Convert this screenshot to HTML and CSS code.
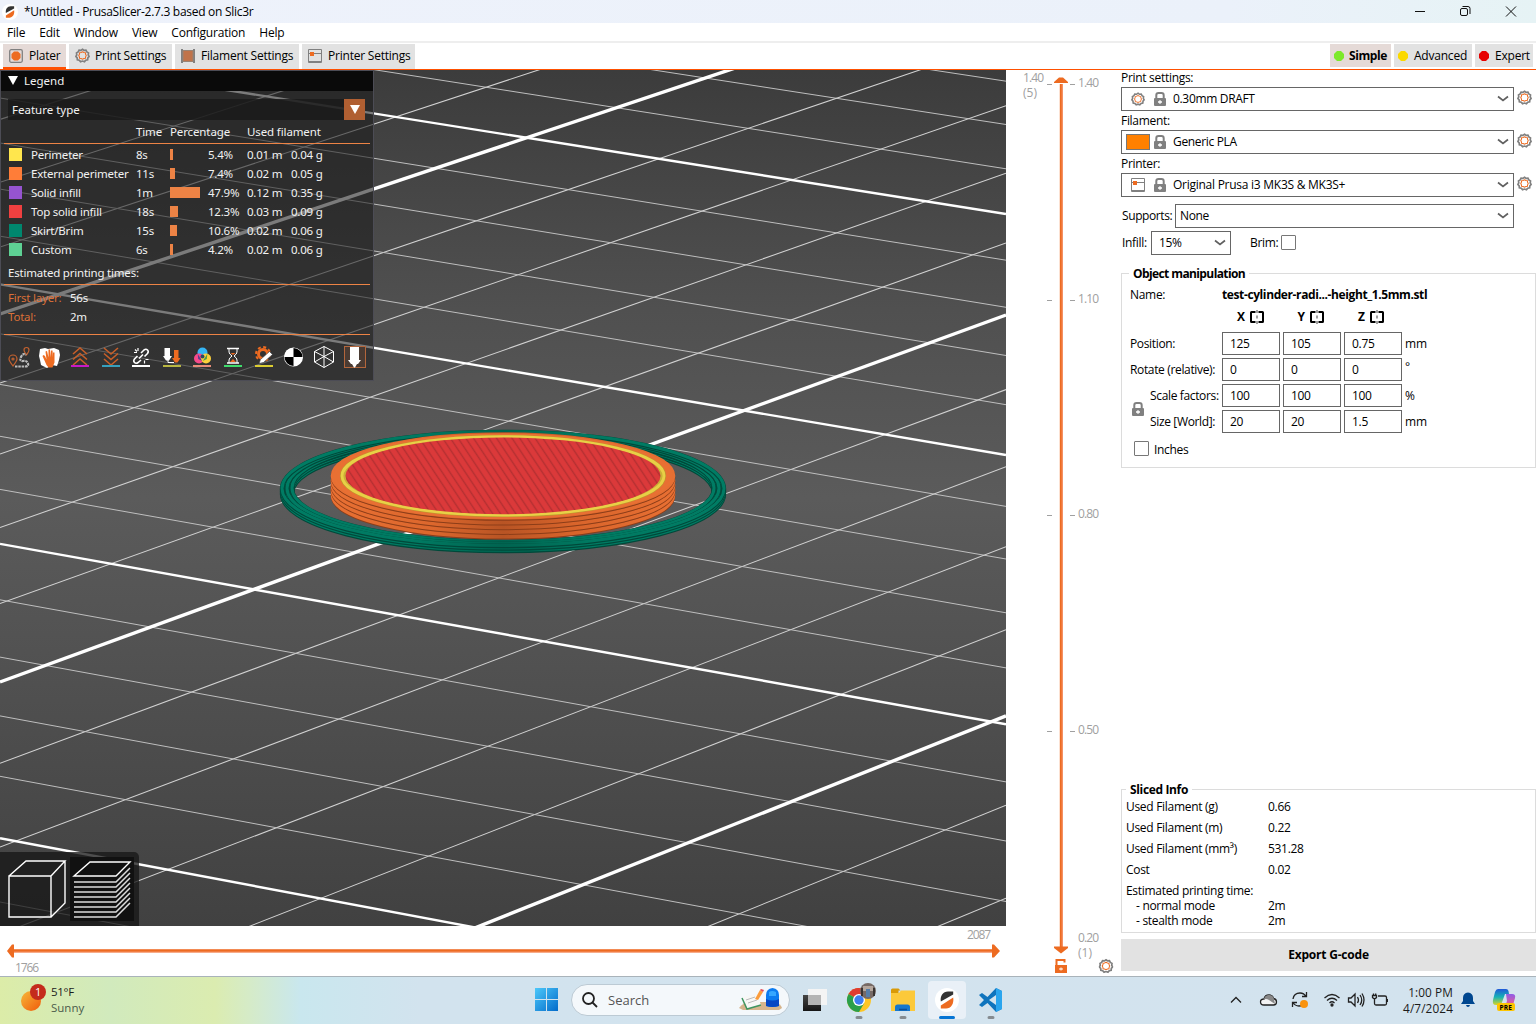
FILE: index.html
```html
<!DOCTYPE html>
<html lang="en">
<head>
<meta charset="utf-8">
<title>*Untitled - PrusaSlicer-2.7.3 based on Slic3r</title>
<link rel="stylesheet" href="styles.css">
</head>
<body>
<svg class="defs" width="0" height="0">
  <defs>
    <symbol id="gear" viewBox="0 0 16 16">
      <path d="M8 1.400l1.700 1.200 2-.3.9 1.900 1.800 1-.3 2 .9 1.800-1.300 1.500-.2 2.100-2 .5-1.400 1.500L8 13.900l-2.100.7-1.400-1.500-2-.5-.2-2.100L1 9l.9-1.800-.3-2 1.800-1 .9-1.900 2 .3z" fill="none" stroke="#808080" stroke-width="1.800"/>
      <path d="M8 4l1.500.8 1.600.3.2 1.600L12 8l-.7 1.400-.2 1.600-1.600.3L8 12l-1.500-.7-1.600-.3-.2-1.600L4 8l.7-1.300.2-1.600 1.600-.3z" fill="none" stroke="#ed6b21" stroke-width="1.100"/>
    </symbol>
    <symbol id="lock" viewBox="0 0 12 14">
      <path d="M2.300 7V3.200Q2.300 1 4.500 1h3Q9.700 1 9.700 3.200V7" fill="none" stroke="#808080" stroke-width="2"/>
      <rect y="6" width="12" height="8" rx="1" fill="#808080"/>
      <path d="M4 10h4M6 8.300v3.400" stroke="#fff" stroke-width="1.400"/>
    </symbol>
    <symbol id="printer" viewBox="0 0 14 14">
      <path d="M.5.5h13v13H.5zM.5 4.500h13" fill="none" stroke="#808080"/>
      <path d="M1 12.500h12" stroke="#808080"/>
      <rect x="2" y="3" width="4" height="4" fill="#ed6b21"/>
    </symbol>
    <symbol id="chev" viewBox="0 0 12 8"><path d="M1 1.500l5 4 5-4" fill="none" stroke="#606060" stroke-width="1.700"/></symbol>
    <symbol id="mirror" viewBox="0 0 14 14">
      <path d="M5.500 2H1.500Q1 2 1 2.500v9Q1 12 1.500 12H5.500M8.500 2h4Q13 2 13 2.500v9Q13 12 12.500 12h-4" fill="none" stroke="#000" stroke-width="2"/>
      <path d="M7 0v3M7 5.500v3M7 11v3" stroke="#808080" stroke-width="1.500"/>
    </symbol>
    <symbol id="prusa" viewBox="0 0 24 24">
      <circle cx="12" cy="12" r="12" fill="#fff"/>
      <path d="M5.800 13.500C4.800 8 8 3.400 13 3.400h5.200v3.200z" fill="#333"/>
      <path d="M18.200 9.500C19.200 15.500 16 20.600 11 20.600H5.800v-3.200z" fill="#ed6b21"/>
    </symbol>
  </defs>
</svg>

<header class="titlebar">
  <svg class="app-icon" width="16" height="16"><use href="#prusa"/></svg>
  <span class="title">*Untitled - PrusaSlicer-2.7.3 based on Slic3r</span>
  <svg class="winbtns" width="104" height="22" fill="none" stroke="#111">
    <path d="M1 10.500h10M92 5.500l10 10M102 5.500l-10 10"/>
    <rect x="46.500" y="7.500" width="7" height="7" rx="1.500"/>
    <path d="M48.500 5.500h5.500q2 0 2 2v5.500"/>
  </svg>
</header>
<nav class="menubar"><span>File</span><span>Edit</span><span>Window</span><span>View</span><span>Configuration</span><span>Help</span></nav>

<div class="tabs">
  <div class="tab t1 on"><svg width="14" height="14"><rect x=".7" y=".7" width="12.600" height="12.600" rx="1.500" fill="none" stroke="#808080" stroke-width="1.300"/><path d="M5 2.500h4l2.500 2.500v4L9 11.500H5L2.500 9V5z" fill="#ed6b21"/></svg><span>Plater</span></div>
  <div class="tab t2"><svg width="15" height="15"><use href="#gear"/></svg><span>Print Settings</span></div>
  <div class="tab t3"><svg width="14" height="14"><path d="M1 0v14M13 0v14" stroke="#808080" stroke-width="2"/><path d="M2 1.500h10v11H2z" fill="#c0734a" stroke="#9a8373"/></svg><span>Filament Settings</span></div>
  <div class="tab t4"><svg width="14" height="14"><use href="#printer"/></svg><span>Printer Settings</span></div>
  <div class="spacer"></div>
  <div class="mode m1 on"><svg width="10" height="12"><path d="M3 1h4l3 3v4l-3 3H3L0 8V4z" fill="#7de92b"/></svg><span>Simple</span></div>
  <div class="mode m2"><svg width="10" height="12"><path d="M3 1h4l3 3v4l-3 3H3L0 8V4z" fill="#fbd900"/></svg><span>Advanced</span></div>
  <div class="mode m3"><svg width="10" height="12"><path d="M3 1h4l3 3v4l-3 3H3L0 8V4z" fill="#e70000"/></svg><span>Expert</span></div>
</div>

<main class="main">
  <section class="left">
    <div class="viewport">
      <svg class="scene" id="scene" width="1006" height="856" viewBox="0 70 1006 856">
        <defs>
          <pattern id="infill" width="7.700" height="20" patternUnits="userSpaceOnUse" patternTransform="skewX(33.500)">
            <rect width="7.700" height="20" fill="#db393a"/><rect x="5.500" width="1.700" height="20" fill="#b53032"/>
          </pattern>
          <linearGradient id="wall" x1="330" x2="676" y1="0" y2="0" gradientUnits="userSpaceOnUse">
            <stop offset="0" stop-color="#e87033"/><stop offset=".3" stop-color="#dc672d"/><stop offset=".5" stop-color="#b85424"/><stop offset=".7" stop-color="#d8642b"/><stop offset="1" stop-color="#e87033"/>
          </linearGradient>
          <linearGradient id="loop" x1="280" x2="727" y1="0" y2="0" gradientUnits="userSpaceOnUse">
            <stop offset="0" stop-color="#007c64"/><stop offset=".3" stop-color="#007a62"/><stop offset=".5" stop-color="#006450"/><stop offset=".7" stop-color="#007a62"/><stop offset="1" stop-color="#007c64"/>
          </linearGradient>
        </defs>
        <g id="grid"></g>
        <g id="skirt"></g>
        <g id="part"></g>
      </svg>

      <div class="legend">
        <div class="lg-title"><svg width="10" height="9"><path d="M0 0h10L5 9z" fill="#fff"/></svg><span>Legend</span></div>
        <div class="lg-combo"><span>Feature type</span><i><svg width="10" height="9"><path d="M0 0h10L5 9z" fill="#fff"/></svg></i></div>
        <div class="lg-head lg-row"><span></span><span></span><span>Time</span><span>Percentage</span><span></span><span>Used filament</span></div>
        <div class="lg-rows">
          <div class="lg-row"><b class="c1"></b><span>Perimeter</span><span>8s</span><i style="width:3px"></i><span>5.4%</span><span>0.01 m</span><span>0.04 g</span></div>
          <div class="lg-row"><b class="c2"></b><span>External perimeter</span><span>11s</span><i style="width:5px"></i><span>7.4%</span><span>0.02 m</span><span>0.05 g</span></div>
          <div class="lg-row"><b class="c3"></b><span>Solid infill</span><span>1m</span><i style="width:30px"></i><span>47.9%</span><span>0.12 m</span><span>0.35 g</span></div>
          <div class="lg-row"><b class="c4"></b><span>Top solid infill</span><span>18s</span><i style="width:8px"></i><span>12.3%</span><span>0.03 m</span><span>0.09 g</span></div>
          <div class="lg-row"><b class="c5"></b><span>Skirt/Brim</span><span>15s</span><i style="width:7px"></i><span>10.6%</span><span>0.02 m</span><span>0.06 g</span></div>
          <div class="lg-row"><b class="c6"></b><span>Custom</span><span>6s</span><i style="width:3px"></i><span>4.2%</span><span>0.02 m</span><span>0.06 g</span></div>
        </div>
        <div class="lg-est">Estimated printing times:</div>
        <div class="lg-times"><div><em>First layer:</em><span>56s</span></div><div><em>Total:</em><span>2m</span></div></div>
        <div class="lg-icons">
          <svg width="373" height="46" viewBox="0 335 373 46" fill="none">
            <g stroke="#c4622f" stroke-width="1.200"><path d="M13 366c-3-4-4-5.500-4-7a4 4 0 0 1 8 0c0 1.500-1 3-4 7zM26.500 355c-2-3-2.500-3.500-2.500-5a2.500 2.500 0 0 1 5 0c0 1.500-.5 2-2.500 5z"/><circle cx="13" cy="359" r="1"/></g>
            <path d="M15 366.500h10q4 0 3-3t-5-2.500-2-4 5-2" stroke="#bbb" stroke-width="2.200" stroke-dasharray="2.500 .8"/>
            <path d="M40 349l5-1 3 1 6-1 5 2 1 5-1 5-2 6-5-1-5 3-6-3-1-5-1-4z" fill="#fff"/>
            <path d="M45 356l-1.500-1-1 1 4 9 2 2.500h4l2-5v-10h-1.500v5l-.5-7h-1.500l-.5 7-.5-8h-1.500v8l-1.500-6.500-1.500.5 1 8z" fill="#ed6b21"/>
            <g stroke="#c95f28" stroke-width="1.600"><path d="M73 354l7-6 7 6M73 359.500l7-6 7 6M73 365l7-6 7 6"/><path d="M104 348l7 6 7-6M104 353.500l7 6 7-6M104 359l7 6 7-6"/></g>
            <path d="M71 366h18" stroke="#c819c6" stroke-width="2"/><path d="M102 366h18" stroke="#36a0bd" stroke-width="2"/><path d="M132 366h18" stroke="#fff" stroke-width="2"/><path d="M163 366h18" stroke="#b9b742" stroke-width="2"/><path d="M193 366h18" stroke="#e88d7a" stroke-width="2"/><path d="M224 366h18" stroke="#3fdc6c" stroke-width="2"/><path d="M255 366h18" stroke="#dccd31" stroke-width="2"/>
            <g stroke="#fff" stroke-width="1.600"><path d="M141 353l3-3q2-1.500 3.500 0t0 3.500l-3 3M141 360l-3 2.500q-2 1.500-3.500 0t0-3.500l3-3M139 358.500l4-4"/><path d="M138 348v3M134 352.500h3M144.500 363.500v-3M148.500 359.500h-3M135 349.500l2 2" stroke-width="1.200"/></g>
            <path d="M164.500 348h5.500v8h2l-3 4.500h-3l-3-4.500h1.500z" fill="#fff"/><path d="M168 359v3.500h6" stroke="#fff"/><path d="M174 350h4.500v8h2l-3 4.500h-2.500l-3-4.500h2z" fill="#ed6b21"/>
            <circle cx="202.500" cy="352.500" r="5" fill="#35b5f5"/><circle cx="199" cy="358.500" r="5" fill="#f74a8b"/><circle cx="206" cy="358.500" r="5" fill="#fbd03b"/><path d="M197.700 354l4.500 7-4-2z" fill="#5a3c8e"/><path d="M207.300 354l-4.500 7 4-2z" fill="#4a9a4a"/><circle cx="202.500" cy="356.500" r="2" fill="#2e4a63"/>
            <path d="M227 348.500h12M227 363h12" stroke="#fff" stroke-width="1.600"/><path d="M229 349v3q0 2 3 4-3 2-3 4v3M237 349v3q0 2-3 4 3 2 3 4v3" stroke="#fff"/><path d="M230.500 353h5l-2.500 2zM230 362l3-3 3 3z" fill="#ed6b21"/>
            <circle cx="263" cy="354" r="4.500" stroke="#ed6b21" stroke-width="3"/><circle cx="263" cy="354" r="7" stroke="#ed6b21" stroke-width="2" stroke-dasharray="3 2.500"/><path d="M259 363.500l1.500-4 9-8 3 3-9 8z" fill="#fff" stroke="#333" stroke-width=".6"/>
            <circle cx="293.500" cy="357" r="9.500" fill="#fff"/><path d="M293.500 357v-9a9 9 0 0 0-9 9zM293.500 357v9a9 9 0 0 0 9-9z" fill="#fff"/><path d="M293.500 357v-9a9 9 0 0 1 9 9zM293.500 357v9a9 9 0 0 1-9-9z" fill="#000"/>
            <path d="M324 346.500l9.500 5v10.500l-9.500 5.500-9.500-5.500v-10.500zM314.500 351.500l9.500 5 9.500-5M324 346.500v21M314.500 362l9.500-5.500 9.500 5.500" stroke="#fff"/>
            <rect x="344.500" y="346.500" width="21" height="21" stroke="#b3663c" fill="#4a3b33"/><path d="M350 347h9v13h2l-3 4h-1l-2 3.500h-1l-2-3.500h-1l-3-4h2z" fill="#fff"/>
          </svg>
        </div>
      </div>

      <div class="views">
        <svg width="139" height="74" viewBox="0 852 139 74" fill="none">
          <rect x="70" y="857" width="64" height="64" fill="#111"/>
          <path d="M9 876h42v41H9zM9 876l17-15h39L51 876M65 861v42l-14 14" stroke="#fff" stroke-width="1.400"/>
          <path d="M74 876l16-14h40l-14 14z" stroke="#fff" stroke-width="1.400"/>
          <path d="M74 882h42l14-14M74 887h42l14-14M74 892h42l14-14M74 897h42l14-14M74 902h42l14-14M74 907h42l14-14M74 912h42l14-14M74 917h42l14-14" stroke="#ddd" stroke-width="1.500"/>
        </svg>
      </div>
    </div>
    <svg class="hslider" width="1006" height="50" viewBox="0 926 1006 50">
      <path d="M14 951h980" stroke="#f59163" stroke-width="3.500"/><path d="M14 950.500h980" stroke="#ed6b21" stroke-width="2"/>
      <path d="M7 951l5-6.500h2v13h-2zM1000 951l-6-6.500h-2v13h2z" fill="#ed6b21"/>
      <text x="967" y="939" textLength="24">2087</text><text x="15" y="972" textLength="24">1766</text>
    </svg>
  </section>

  <svg class="vslider" width="115" height="906" viewBox="1006 70 115 906">
    <path d="M1061.500 84v864" stroke="#f59163" stroke-width="3"/><path d="M1060.700 84v864" stroke="#ed6b21" stroke-width="1.800"/>
    <path d="M1054 82l5-4.500h4l5 4.500v1h-14zM1054 948v-1.500h14v1.500l-7 5.500z" fill="#ed6b21"/>
    <path d="M1047 84.500h5M1070 84.500h5M1047 300.500h5M1070 300.500h5M1047 515.500h5M1070 515.500h5M1047 731.500h5M1070 731.500h5" stroke="#a0a0a0"/>
    <text x="1023" y="82" textLength="21">1.40</text><text x="1023" y="97" textLength="14">(5)</text>
    <text x="1078" y="87" textLength="21">1.40</text><text x="1078" y="303" textLength="21">1.10</text><text x="1078" y="518" textLength="21">0.80</text><text x="1078" y="734" textLength="21">0.50</text><text x="1078" y="942" textLength="21">0.20</text><text x="1078" y="957" textLength="14">(1)</text>
    <path d="M1056.500 966v-6h8v2.500" fill="none" stroke="#ed6b21" stroke-width="2"/><rect x="1055" y="965" width="12" height="8" fill="#ed6b21"/><path d="M1059 969h4M1061 967.500v3" stroke="#fff"/>
    <use href="#gear" x="1098.500" y="958.500" width="15" height="15"/>
  </svg>

  <aside class="panel">
    <label class="plab">Print settings:</label>
    <div class="prow"><div class="combo"><svg class="ic" width="14" height="14"><use href="#gear"/></svg><svg class="lk" width="12" height="14"><use href="#lock"/></svg><span>0.30mm DRAFT</span><svg class="cv" width="12" height="8"><use href="#chev"/></svg></div><svg class="pg" width="15" height="15"><use href="#gear"/></svg></div>
    <label class="plab">Filament:</label>
    <div class="prow"><div class="combo"><i class="sw"></i><svg class="lk" width="12" height="14"><use href="#lock"/></svg><span>Generic PLA</span><svg class="cv" width="12" height="8"><use href="#chev"/></svg></div><svg class="pg" width="15" height="15"><use href="#gear"/></svg></div>
    <label class="plab">Printer:</label>
    <div class="prow"><div class="combo"><svg class="ic" width="14" height="14"><use href="#printer"/></svg><svg class="lk" width="12" height="14"><use href="#lock"/></svg><span class="wide">Original Prusa i3 MK3S &amp; MK3S+</span><svg class="cv" width="12" height="8"><use href="#chev"/></svg></div><svg class="pg" width="15" height="15"><use href="#gear"/></svg></div>
    <div class="srow"><span class="k1">Supports:</span><div class="combo plain"><span>None</span><svg class="cv" width="12" height="8"><use href="#chev"/></svg></div></div>
    <div class="srow s2"><span class="k2">Infill:</span><div class="combo pct"><span>15%</span><svg class="cv" width="12" height="8"><use href="#chev"/></svg></div><span class="k3">Brim:</span><i class="cb"></i></div>

    <section class="group obj">
      <h3>Object manipulation</h3>
      <div class="name"><span>Name:</span><strong>test-cylinder-radi...-height_1.5mm.stl</strong></div>
      <div class="axes"><span>X<svg width="14" height="14"><use href="#mirror"/></svg></span><span>Y<svg width="14" height="14"><use href="#mirror"/></svg></span><span>Z<svg width="14" height="14"><use href="#mirror"/></svg></span></div>
      <div class="fields">
        <span>Position:</span><b>125</b><b>105</b><b>0.75</b><u>mm</u>
        <span>Rotate (relative):</span><b>0</b><b>0</b><b>0</b><u class="deg">°</u>
        <span class="ind">Scale factors:</span><b>100</b><b>100</b><b>100</b><u>%</u>
        <span class="ind">Size [World]:</span><b>20</b><b>20</b><b>1.5</b><u>mm</u>
        <svg class="ratio" width="12" height="14"><use href="#lock"/></svg>
      </div>
      <div class="inches"><i class="cb"></i><span>Inches</span></div>
    </section>

    <section class="group info">
      <h3>Sliced Info</h3>
      <div class="ir"><span>Used Filament (g)</span><span>0.66</span></div>
      <div class="ir"><span>Used Filament (m)</span><span>0.22</span></div>
      <div class="ir"><span>Used Filament (mm³)</span><span>531.28</span></div>
      <div class="ir"><span>Cost</span><span>0.02</span></div>
      <div class="ir est"><span>Estimated printing time:</span></div>
      <div class="ir sm"><span>- normal mode</span><span>2m</span></div>
      <div class="ir sm"><span>- stealth mode</span><span>2m</span></div>
    </section>
    <div class="export">Export G-code</div>
  </aside>
</main>

<footer class="taskbar">
  <svg class="sun" width="30" height="34" viewBox="18 980 30 34"><defs><linearGradient id="sg" x1="0" y1="0" x2="1" y2="1"><stop offset="0" stop-color="#f6b93b"/><stop offset="1" stop-color="#f05a0a"/></linearGradient></defs><circle cx="31" cy="999" r="10" fill="url(#sg)"/><circle cx="38" cy="990" r="8" fill="#c42b1c"/><text x="35" y="994" fill="#fff">1</text></svg>
  <div class="weather"><span>51°F</span><em>Sunny</em></div>
  <svg class="start" width="24" height="24"><defs><linearGradient id="wg" x1="0" y1="0" x2="24" y2="24" gradientUnits="userSpaceOnUse"><stop offset="0" stop-color="#4cc8fa"/><stop offset="1" stop-color="#0067c8"/></linearGradient></defs><path d="M0 0h11v11H0zM12 0h11v11H12zM0 12h11v11H0zM12 12h11v11H12z" fill="url(#wg)"/></svg>
  <div class="search">
    <svg width="16" height="16" fill="none" stroke="#222" stroke-width="1.800"><circle cx="6.500" cy="6.500" r="5.500"/><path d="M10.500 10.500l4.500 4.500"/></svg>
    <span>Search</span>
    <svg class="pack" width="46" height="28" viewBox="0 0 46 28"><path d="M1 22q4-6 12-6h24q6 2 7 6l-3 2H5z" fill="#d6b48c"/><path d="M5 11l14-3 4 11-14 4z" fill="#f7f7f5"/><path d="M4 12l5 11 14-4" fill="none" stroke="#3f9560" stroke-width="1.500"/><path d="M8 14l9-3M10 17l9-3" stroke="#bbb"/><path d="M17 13l5-9 3 2-5 8z" fill="#fb9c3b"/><path d="M22 4l3 2 1-2-3-1z" fill="#e24a58"/><path d="M28 9q0-6 6.500-7 6.500 1 6.500 7v11q-6.500 2-13 0z" fill="#0b7bf0"/><path d="M28 13q6.500 3 13 0v7q-6.500 2-13 0z" fill="#0647c4"/><path d="M31 6q3-2 7 0v4h-7z" fill="#35a7ff"/></svg>
  </div>
  <svg class="apps" width="200" height="48" viewBox="800 976 200 48">
    <defs><linearGradient id="tv" x1="0" y1="0" x2="0" y2="1"><stop offset="0" stop-color="#454545"/><stop offset="1" stop-color="#151515"/></linearGradient></defs>
    <rect x="808" y="989" width="19" height="16" fill="#f4f4f4"/><rect x="803" y="995" width="18" height="16" fill="url(#tv)"/><rect x="808" y="995" width="13" height="10" fill="#b4b4b4"/>
    <circle cx="859" cy="1000" r="12" fill="#fdc624"/><path d="M859 1000L848.600 994A12 12 0 0 1 869.400 994z" fill="#df3c30"/><path d="M859 1000L848.600 994A12 12 0 0 0 859 1012l5-8.500z" fill="#2a9f4a"/><path d="M848.600 994a12 12 0 0 1 10.400-6v7z" fill="#df3c30"/><circle cx="859" cy="1000" r="6" fill="#fff"/><circle cx="859" cy="1000" r="4.700" fill="#3d7ef0"/>
    <circle cx="868" cy="991" r="8" fill="#776a65"/><path d="M863 986h10v5h-10z" fill="#b5a79d"/><path d="M866 989h4v8h-4z" fill="#577ea8"/><path d="M862 988v8M874 988v8" stroke="#3a3431" stroke-width="2"/>
    <path d="M891 990q0-1.500 1.500-1.500h6l2 2h-2v4H891z" fill="#d99a07"/><path d="M891 993h8l2-2.500h14V1011h-24z" fill="#fcc93a"/><path d="M895 1011v-4q0-2.500 2.500-2.500h10q2.500 0 2.500 2.500v4z" fill="#1777cc"/><path d="M899 1009.500h8" stroke="#0b4f98" stroke-width="1.500"/>
    <rect x="928" y="981" width="38" height="38" rx="4" fill="#e9f0f7"/><use href="#prusa" x="935" y="988" width="24" height="24"/>
    <rect x="939" y="1016" width="16" height="3" rx="1.500" fill="#0574d4"/>
    <path d="M857 1017.500h4M901 1017.500h4M989 1017.500h4" stroke="#858b90" stroke-width="3" stroke-linecap="round"/>
  </svg>
  <svg class="vsc" width="24" height="24" viewBox="0 0 24 24"><path d="M17 0l6 3v18l-6 3L8.500 15 3 19l-3-2 5-5-5-5 3-2 5.500 4z" fill="#0f74bd"/><path d="M17 0l6 3v18l-6 3z" fill="#2aa5ee"/><path d="M17 7v10l-7-5z" fill="#d3e4ee"/></svg>
  <svg class="tray" width="160" height="48" viewBox="1228 976 160 48" fill="none" stroke="#222" stroke-width="1.300">
    <path d="M1231 1002.500l5-5 5 5"/>
    <path d="M1264 1005q-3.500 0-3.500-3t3.500-3q1-4 5-4t4.500 3.500q3 .5 3 3.500t-3 3z" fill="#f3f3f3"/><path d="M1263 1000q3-2 6 0l6 4-1-5q-1-4-5-4t-5 4z" fill="#888" stroke="none"/>
    <path d="M1293 999q1-6 7-6 4 0 6 3.500M1306.500 992v4.500h-4.500M1305 1001q-1 5-6 5-4 0-6-3.500M1292.500 1007v-4.500h4.500"/><circle cx="1304" cy="1004" r="4" fill="#f9930e" stroke="none"/>
    <path d="M1324.500 998q7.500-7 15 0M1327 1000.500q5-4.500 10 0M1329.500 1003q2.500-2.500 5 0"/><circle cx="1332" cy="1005" r="1" fill="#222"/>
    <path d="M1348.500 998h2.500l4-4v12l-4-4h-2.500zM1357.500 997q2 3 0 6M1360 995q3.500 5 0 10M1362 993.500q4 6.500 0 13"/>
    <path d="M1378 996h7q1.500 0 1.500 1.500v6q0 1.500-1.500 1.500h-9q-1.500 0-1.500-1.500v-3M1387.500 999v3M1372.500 995.500h4v2q-2 2.500-4 0zM1374.500 999v2M1373.500 993.500v2M1375.700 993.500v2"/>
  </svg>
  <div class="clock"><span>1:00 PM</span><span>4/7/2024</span></div>
  <svg class="bell" width="14" height="16"><path d="M0 12l2-3V6q0-5 5-5.500Q12 1 12 6v3l2 3zM5 13h4q-.5 2-2 2t-2-2z" fill="#00478f"/></svg>
  <svg class="copilot" width="24" height="24" viewBox="0 0 24 24"><defs><linearGradient id="ca" x1="0" y1="0" x2="0" y2="1"><stop offset="0" stop-color="#2159d8"/><stop offset=".5" stop-color="#15b2b6"/><stop offset="1" stop-color="#d8d52a"/></linearGradient><linearGradient id="cb" x1="0" y1="0" x2="0" y2="1"><stop offset="0" stop-color="#8f5be8"/><stop offset="1" stop-color="#ec5f92"/></linearGradient></defs><path d="M6 1h8q2 0 2.500 2L17 6h-4L9 17H4q-4 0-3-5l2-8q1-3 3-3z" fill="url(#ca)"/><path d="M14 6h6q4 0 3 4l-2 7h-9q2 0 3-4z" fill="url(#cb)"/><rect x="5" y="15" width="18" height="8" rx="2" fill="#fdc500"/><text x="7.500" y="21.500">PRE</text></svg>
</footer>
<script src="scene.js"></script>
</body>
</html>
```
FILE: styles.css
```css
* { box-sizing: border-box; }
body { margin: 0; width: 1536px; height: 1024px; overflow: hidden; display: flex; flex-direction: column; background: #fff; color: #000; font: 12px/16px "Open Sans", "Noto Sans", sans-serif; letter-spacing: -0.3px; white-space: nowrap; }
svg { display: block; flex: none; }
.defs { position: absolute; }
em, i, u, b { font-style: normal; text-decoration: none; font-weight: 400; }

.titlebar { height: 23px; background: linear-gradient(90deg, #eef2fb, #ebf1fa 80%, #e6f3f5); display: flex; align-items: center; padding: 0 18px 0 2px; }
.titlebar .title { margin-left: 6px; flex: 1; letter-spacing: -0.28px; }
.menubar { height: 18px; display: flex; gap: 14px; padding: 2px 0 0 7px; letter-spacing: -0.2px; }
.tabs { height: 29px; border-top: 2px solid #eee; border-bottom: 1px solid #ff5000; display: flex; padding: 0 3px; gap: 3px; }
.tab, .mode { background: #e2e2e2; display: flex; align-items: center; height: 23px; margin-top: 1px; padding: 0 6px; letter-spacing: -0.22px; }
.tab { gap: 5px; height: 25px; padding-bottom: 2px; }
.t1, .t3, .t4 { gap: 6px; }
.mode span { margin-left: 6px; }
.mode { padding-left: 4px; }
.tab.on { background: #e5dad7; box-shadow: inset 0 -2px #ff5000; }
.mode.on { background: #e5dad7; font-weight: 700; }
.t1 { width: 63px; } .t2 { width: 103px; } .t3 { width: 124px; } .t4 { width: 113px; }
.m1 { width: 61px; } .m2 { width: 78px; } .m3 { width: 58px; }
.mode.m1 span { margin-left: 5px; letter-spacing: -0.4px; }
.spacer { flex: 1; }

.main { height: 906px; display: flex; }
.left { width: 1006px; }
.viewport { position: relative; height: 856px; background: linear-gradient(#3c3c3c, #505050 28%, #5b5b5b 50%, #525252 68%, #414141); }
.hslider text, .vslider text { fill: #a0a0a0; font-size: 12px; letter-spacing: 0; }

.legend { position: absolute; left: 0; top: 0; width: 374px; height: 311px; background: rgba(28, 28, 28, .58); border: 1px solid #4c4c55; color: #f2f2f2; font: 11.500px/19px "Noto Sans", sans-serif; letter-spacing: -0.21px; }
.lg-title { height: 20px; background: #0a0a0a; display: flex; align-items: center; padding: 0 0 2px 7px; gap: 6px; letter-spacing: 0; }
.lg-combo { margin: 8px 8px 0 7px; height: 21px; display: flex; justify-content: space-between; align-items: center; background: rgba(26, 26, 26, .82); padding-left: 4px; letter-spacing: 0; }
.lg-combo i { width: 21px; height: 21px; background: #b05f32; display: grid; place-items: center; }
.lg-row { display: grid; grid-template-columns: 22px 105px 34px 38px 39px 44px 60px; align-items: center; height: 19px; padding-left: 8px; }
.lg-row b { width: 13px; height: 13px; }
.lg-row i { height: 11px; background: #ed8345; }
.lg-head { height: 24px; margin: 0 3px; padding: 0 0 1px 5px; border-bottom: 1px solid #ed8345; letter-spacing: -0.12px; }
.lg-rows { margin-top: 1px; }
.c1 { background: #ffe64d; } .c2 { background: #ff7d38; } .c3 { background: #9654d0; } .c4 { background: #f04040; } .c5 { background: #00876e; } .c6 { background: #5ed194; }
.lg-est { height: 26px; margin: 0 3px; padding: 4px 0 0 4px; border-bottom: 1px solid #ed8345; }
.lg-times { height: 50px; margin: 0 3px; padding: 3px 0 0 4px; border-bottom: 1px solid #ed8345; }
.lg-times div { display: flex; }
.lg-times em { width: 62px; color: #dc7038; }
.lg-icons { margin-left: -1px; height: 44px; }
.lg-icons svg { overflow: visible; }
.views { position: absolute; left: 0; bottom: 0; background: rgba(22, 22, 22, .76); border-top-right-radius: 5px; }

.panel { width: 415px; display: flex; flex-direction: column; }
.plab { height: 19px; padding-top: 2px; }
.plab:first-child { height: 17px; padding-top: 0; }
.prow { display: flex; align-items: center; height: 24px; gap: 4px; }
.pg { margin: 0 0 3px -1px; }
.combo { width: 393px; height: 24px; border: 1px solid #666; display: flex; align-items: center; }
.combo .ic { margin: 0 9px; }
.combo .sw { width: 24px; height: 16px; background: #ff8000; border: 1px solid #777; margin: 0 4px; }
.combo .lk { margin-right: 7px; }
.combo span { letter-spacing: -0.33px; }
.combo span.wide { letter-spacing: -0.26px; }
.combo .cv { margin-left: auto; margin-right: 4px; }
.srow { display: flex; align-items: center; height: 24px; margin-top: 7px; }
.srow.s2 { margin-top: 3px; }
.k1 { width: 54px; padding-left: 1px; letter-spacing: -0.4px; } .k2 { width: 30px; padding-left: 1px; } .k3 { width: 31px; margin-left: 19px; }
.plain { width: 339px; padding-left: 4px; }
.pct { width: 80px; padding-left: 7px; }
.cb { width: 15px; height: 15px; border: 1px solid #777; border-radius: 1px; background: #fff; }
.s2 .cb { margin-bottom: 2px; }
.group { border: 1px solid #dcdcdc; }
.group h3 { margin: -8px 0 0 7px; padding: 0 4px; background: #fff; width: max-content; font-size: 12px; line-height: 16px; }
.obj { height: 195px; margin-top: 18px; }
.obj h3 { letter-spacing: -0.6px; }
.name { display: flex; margin: 5px 0 0 8px; }
.name span { width: 92px; }
.name strong { letter-spacing: -0.39px; }
.axes { display: flex; margin: 6px 0 0 115px; height: 16px; font-weight: 700; }
.axes span { display: flex; align-items: center; gap: 5px; width: 60.500px; }
.fields { display: grid; grid-template-columns: 89px 58px 58px 58px 30px; grid-auto-rows: 23px; gap: 3px; margin: 7px 0 0 8px; align-items: center; position: relative; }
.fields > span { width: 92px; letter-spacing: -0.35px; }
.fields b { border: 1px solid #666; height: 23px; line-height: 21px; padding-left: 7px; }
.fields .ind { padding-left: 20px; }
.fields u { letter-spacing: -0.1px; }
.fields .deg { align-self: start; padding-top: 1px; }
.ratio { position: absolute; left: 2px; top: 70px; }
.inches { display: flex; align-items: center; gap: 5px; margin: 8px 0 0 12px; }
.inches .cb { margin-bottom: 2px; }
.info { height: 144px; margin-top: auto; }
.info h3 { margin: -8px 0 -2px 4px; letter-spacing: -0.35px; }
.ir { display: flex; height: 21px; line-height: 21px; padding-left: 4px; }
.ir span:first-child { width: 142px; }
.est { height: 18px; }
.sm { height: 15px; line-height: 15px; }
.sm span:first-child { padding-left: 10px; }
.export { height: 32px; margin: 6px 0 5px; background: #e2e2e2; text-align: center; line-height: 32px; font-weight: 700; letter-spacing: -0.2px; }

.taskbar { height: 48px; padding-bottom: 1px; border-top: 1px solid #a9b3ba; background: linear-gradient(90deg, #dceca8 0, #d1eabd 110px, #dbecb0 215px, #d5ebc8 250px, #c9e7ee 300px, #d2e3ee 420px, #d3e3ee); display: flex; align-items: center; color: #1b1b1b; font-size: 11.500px; }
.sun { margin: 0 0 3px 18px; } .sun text { font-size: 11px; }
.weather { display: flex; flex-direction: column; margin-left: 3px; width: 484px; }
.weather em { color: #4b5b4b; letter-spacing: 0; }
.search { width: 219px; height: 32px; margin-left: 12px; border-radius: 16px; background: #f4f8fb; border: 1px solid #bccad4; display: flex; align-items: center; padding: 0 5px 0 10px; gap: 10px; font-size: 13px; color: #555; letter-spacing: 0; }
.pack { margin-left: auto; }
.apps { margin-left: 10px; }
.vsc { margin-left: -21px; }
.tray { margin-left: 225px; }
.clock { display: flex; flex-direction: column; align-items: flex-end; width: 65px; letter-spacing: 0.1px; font-size: 11.800px; }
.bell { margin-left: 8px; }
.copilot { margin-left: 17px; } .copilot text { font: 700 6.500px "Open Sans", sans-serif; letter-spacing: 0.2px; }
```
FILE: scene.js
```js
const NS = 'http://www.w3.org/2000/svg';
const VIEW_W = 1006;

function add(parent, tag, attrs) {
  const el = document.createElementNS(NS, tag);
  for (const key in attrs) el.setAttribute(key, attrs[key]);
  parent.appendChild(el);
}

// Projective spacing of the bed lines: height of line n at one edge of the view.
const at = (n, base, step, d) => (base + step * n) / (1 + d * n);

const grid = document.getElementById('grid');
function bedLine(y0, y1, stroke, width) {
  add(grid, 'path', {
    d: `M0 ${y0.toFixed(1)}L${VIEW_W} ${y1.toFixed(1)}`,
    stroke,
    'stroke-width': width
  });
}
for (const major of [false, true]) {
  for (let n = -5; n <= 17; n++) {
    if ((n % 5 === 0) !== major) continue;
    bedLine(at(n, 314, 63.03, -0.0155), at(n, -22.6, 62.54, -0.0158), major ? '#fff' : '#d2d2d2', major ? 3.4 : 1.05);
    bedLine(at(n, 54, 42.9, -0.0112), at(n, 214, 43.42, -0.0105), major ? '#fff' : '#c4c4c4', major ? 2.4 : 0.95);
  }
}

function ring(parent, cy, rx, ry, stroke, width, fill = 'none') {
  add(parent, 'ellipse', { cx: 503, cy, rx, ry, fill, stroke, 'stroke-width': width });
}

// Skirt: three loops, stacked layer by layer. Loops nearer the viewer sit wider apart.
const skirt = document.getElementById('skirt');
for (const dy of [5, 2.5, 0]) {
  for (const [rx, ry, shift] of [[211, 53.5, -0.6], [216, 55.3, -0.3], [221, 57, 0]]) {
    ring(skirt, 489 + shift + dy, rx, ry, '#00493a', 4.4);
    ring(skirt, 488.5 + shift + dy, rx, ry, 'url(#loop)', 3);
  }
}

// Cylinder: side walls from the bottom layer to the top one, then the top face.
const part = document.getElementById('part');
for (let k = 4; k >= 0; k--) {
  ring(part, 477 + k * 4.7, 170.5, 42, '#8c3d18', 3.6, '#8c3d18');
  ring(part, 476 + k * 4.7, 170.5, 42, 'url(#wall)', 3.6, '#c25a28');
}
ring(part, 476.3, 168, 41.5, '#e87033', 3, '#e87033');
ring(part, 476, 161.5, 39.6, '#b89d2c', 3, '#b89d2c');
ring(part, 475.9, 161, 39.2, '#e8d046', 2.8, '#c9b036');
ring(part, 475.8, 157.5, 38.4, 'none', 0, 'url(#infill)');
```
